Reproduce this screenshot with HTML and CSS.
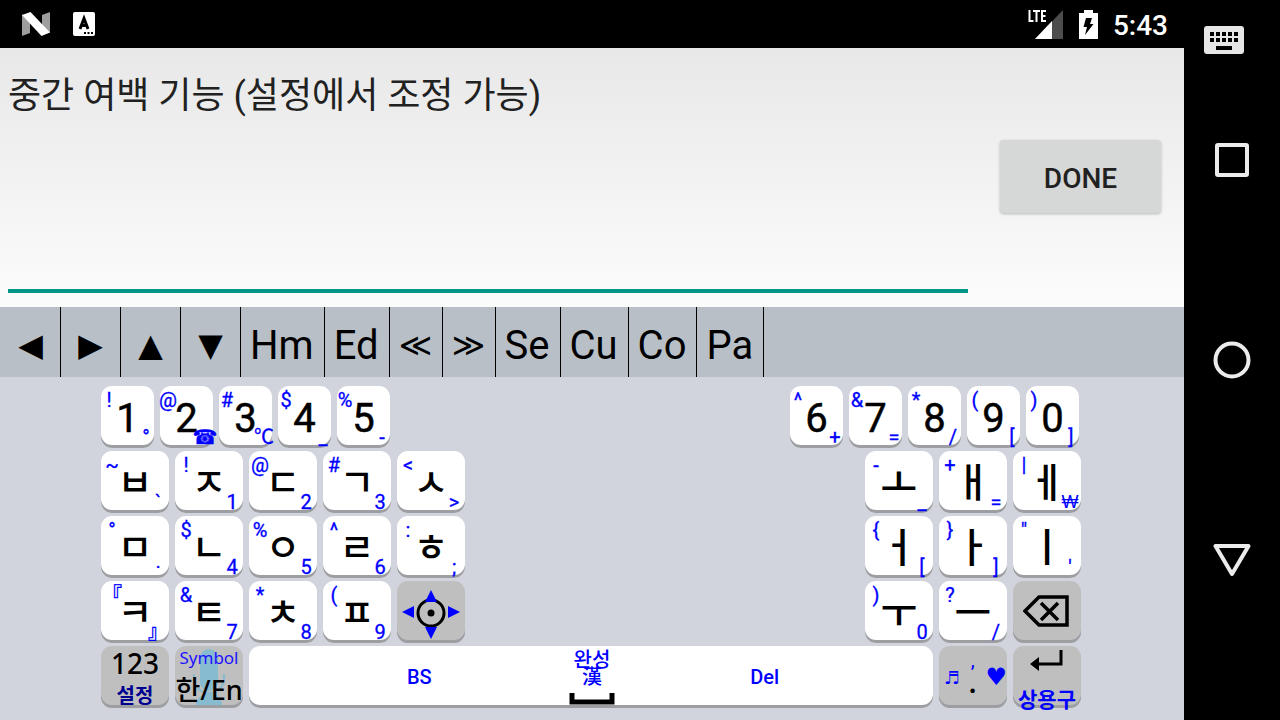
FILE: index.html
```html
<!DOCTYPE html>
<html lang="ko">
<head>
<meta charset="utf-8">
<meta name="viewport" content="width=device-width, initial-scale=1">
<title>한글 키보드</title>
<link rel="stylesheet" href="styles.css">
</head>
<body>
<div class="device">
  <div class="app">
    <header class="status">
      <div class="status-group">
        <svg class="icon-n" width="28" height="24" viewBox="0 0 28 24" aria-hidden="true"><path fill="#9e9e9e" d="M0 2.500l8 4V21L0 24zM20 3l8-3v21l-8-4z"/><path fill="#fff" d="M0 3L8.500 0 28 20.500 19.500 24z"/></svg>
        <svg width="22" height="24" viewBox="0 0 22 24" aria-hidden="true"><rect width="22" height="24" rx="2" fill="#fff"/><path d="M7 17l4-10.500L15 17M8.500 13.500h5" fill="none" stroke="#000" stroke-width="3"/><path d="M11 20h2v2h-2zM14.500 20h2v2h-2zM18 20h2v2h-2z"/></svg>
      </div>
      <div class="status-group status-right">
        <svg width="36" height="30" viewBox="0 0 36 30" role="img" aria-label="LTE"><path d="M35 1v29H7z" fill="#4d4d4d"/><path d="M24 12v18H7z" fill="#fff"/><path d="M0 0h19v15H0z"/><path fill="none" stroke="#fff" stroke-width="2" d="M1.500 1v11h4M5 2h7M8.500 2v11M18 2h-4v10h4M14 7h3.500"/></svg>
        <svg class="battery" width="19" height="29" viewBox="0 0 19 29" aria-hidden="true"><path fill="#fff" d="M0 3h5V0h9v3h5v26H0z"/><path d="M7 8h6l-2 6h3.500L6 25l2-8H4.500z"/></svg>
        <time class="clock">5:43</time>
      </div>
    </header>
    <main class="editor">
      <textarea class="editor-text" aria-label="입력" rows="1" spellcheck="false">중간 여백 기능 (설정에서 조정 가능)</textarea>
      <button class="done">DONE</button>
    </main>
    <div class="toolbar">
      <button class="tool arrow">◀</button><button class="tool arrow">▶</button><button class="tool arrow">▲</button><button class="tool arrow">▼</button><button class="tool">Hm</button><button class="tool">Ed</button><button class="tool jump">≪</button><button class="tool jump">≫</button><button class="tool">Se</button><button class="tool">Cu</button><button class="tool">Co</button><button class="tool">Pa</button>
    </div>
    <div class="keyboard">
      <div class="row digits">
        <div class="half">
          <button class="key"><span class="hint">!</span><span class="main">1</span><span class="hint low">°</span></button>
          <button class="key"><span class="hint">@</span><span class="main">2</span><span class="hint low symbol">☎</span></button>
          <button class="key"><span class="hint">#</span><span class="main">3</span><span class="hint low">℃</span></button>
          <button class="key"><span class="hint">$</span><span class="main">4</span><span class="hint low">_</span></button>
          <button class="key"><span class="hint">%</span><span class="main">5</span><span class="hint low">-</span></button>
        </div>
        <div class="half">
          <button class="key"><span class="hint">^</span><span class="main">6</span><span class="hint low">+</span></button>
          <button class="key"><span class="hint">&amp;</span><span class="main">7</span><span class="hint low">=</span></button>
          <button class="key"><span class="hint">*</span><span class="main">8</span><span class="hint low">/</span></button>
          <button class="key"><span class="hint">(</span><span class="main">9</span><span class="hint low">[</span></button>
          <button class="key"><span class="hint">)</span><span class="main">0</span><span class="hint low">]</span></button>
        </div>
      </div>
      <div class="row">
        <div class="half">
          <button class="key"><span class="hint">~</span><span class="main">ㅂ</span><span class="hint low">`</span></button>
          <button class="key"><span class="hint">!</span><span class="main">ㅈ</span><span class="hint low">1</span></button>
          <button class="key"><span class="hint">@</span><span class="main">ㄷ</span><span class="hint low">2</span></button>
          <button class="key"><span class="hint">#</span><span class="main">ㄱ</span><span class="hint low">3</span></button>
          <button class="key"><span class="hint">&lt;</span><span class="main">ㅅ</span><span class="hint low">&gt;</span></button>
        </div>
        <div class="half">
          <button class="key"><span class="hint">-</span><span class="main vowel">ㅗ</span><span class="hint low">_</span></button>
          <button class="key"><span class="hint">+</span><span class="main vowel">ㅐ</span><span class="hint low">=</span></button>
          <button class="key"><span class="hint">|</span><span class="main vowel">ㅔ</span><span class="hint low won">₩</span></button>
        </div>
      </div>
      <div class="row">
        <div class="half">
          <button class="key"><span class="hint">°</span><span class="main">ㅁ</span><span class="hint low">·</span></button>
          <button class="key"><span class="hint">$</span><span class="main">ㄴ</span><span class="hint low">4</span></button>
          <button class="key"><span class="hint">%</span><span class="main">ㅇ</span><span class="hint low">5</span></button>
          <button class="key"><span class="hint">^</span><span class="main">ㄹ</span><span class="hint low">6</span></button>
          <button class="key"><span class="hint">:</span><span class="main">ㅎ</span><span class="hint low">;</span></button>
        </div>
        <div class="half">
          <button class="key"><span class="hint">{</span><span class="main vowel">ㅓ</span><span class="hint low">[</span></button>
          <button class="key"><span class="hint">}</span><span class="main vowel">ㅏ</span><span class="hint low">]</span></button>
          <button class="key"><span class="hint">"</span><span class="main vowel">ㅣ</span><span class="hint low">'</span></button>
        </div>
      </div>
      <div class="row">
        <div class="half">
          <button class="key"><span class="hint quote">『</span><span class="main">ㅋ</span><span class="hint low quote">』</span></button>
          <button class="key"><span class="hint">&amp;</span><span class="main">ㅌ</span><span class="hint low">7</span></button>
          <button class="key"><span class="hint">*</span><span class="main">ㅊ</span><span class="hint low">8</span></button>
          <button class="key"><span class="hint">(</span><span class="main">ㅍ</span><span class="hint low">9</span></button>
          <button class="key gray" aria-label="이동"><svg class="art pad" width="60" height="50" viewBox="0 0 60 50"><circle cx="30" cy="24" r="13" fill="none" stroke="#000" stroke-width="3"/><circle cx="30" cy="24" r="3.500"/><path fill="#00f" d="M1 23l12-6v12zM59 23l-12-6v12zM30 1l-6 12h12zM30 50l-6-12h12z"/></svg></button>
        </div>
        <div class="half">
          <button class="key"><span class="hint">)</span><span class="main vowel">ㅜ</span><span class="hint low">0</span></button>
          <button class="key"><span class="hint">?</span><span class="main vowel">ㅡ</span><span class="hint low">/</span></button>
          <button class="key gray" aria-label="지우기"><svg class="art" width="48" height="34" viewBox="0 0 48 34"><path fill="none" stroke="#000" stroke-width="3.500" d="M2 16L16 2h28v28H16zM18 8l17 17M35 8L18 25"/></svg></button>
        </div>
      </div>
      <div class="row bottom">
        <button class="key gray stack settings"><span>123</span><span class="sub">설정</span></button>
        <button class="key gray stack language"><svg class="mic" width="32" height="56" viewBox="0 0 32 56" aria-hidden="true"><rect x="7" width="18" height="42" rx="9" fill="#87bbd0"/><path d="M1 25v5c0 8 7 14 15 14s15-6 15-14v-5" fill="none" stroke="#87bbd0" stroke-width="2"/><path d="M3 56c0-7 7-12 13-12s13 5 13 12z" fill="#87bbd0"/></svg><span class="symbol-label">Symbol</span><span class="lang-label">한/En</span></button>
        <button class="key space"><span>BS</span><span class="middle"><span>완성</span><span class="hanja">漢</span><svg width="46" height="13" viewBox="0 0 46 13" aria-hidden="true"><path d="M3 0v9h40V0" fill="none" stroke="#000" stroke-width="5"/></svg></span><span>Del</span></button>
        <button class="key gray marks"><span class="note">♬</span><span class="dots"><span class="tick">,</span><span class="period">.</span></span><span class="heart">♥</span></button>
        <button class="key gray stack enter"><svg width="34" height="24" viewBox="0 0 34 24" aria-hidden="true"><path d="M31 0v14H6" fill="none" stroke="#000" stroke-width="3"/><path d="M0 14l9-7v14z"/></svg><span class="phrase">상용구</span></button>
      </div>
    </div>
  </div>
  <nav class="nav">
    <button class="nav-button ime" aria-label="키보드 선택"><svg width="40" height="28" viewBox="0 0 40 28"><rect width="40" height="28" rx="3" fill="#e6e6e6"/><path d="M6 8h28M6 14h28" stroke="#000" stroke-width="4" stroke-dasharray="4 2"/><path d="M12 20h16v4H12z"/></svg></button>
    <button class="nav-button" aria-label="최근 앱"><svg width="38" height="38" viewBox="0 0 38 38"><rect x="4" y="4" width="30" height="30" rx="1" fill="none" stroke="#ececec" stroke-width="4"/></svg></button>
    <button class="nav-button" aria-label="홈"><svg width="38" height="38" viewBox="0 0 38 38"><circle cx="19" cy="19" r="16.500" fill="none" stroke="#ececec" stroke-width="4"/></svg></button>
    <button class="nav-button" aria-label="뒤로"><svg width="38" height="38" viewBox="0 0 38 38"><path d="M2.500 5h33L19 33z" fill="none" stroke="#ececec" stroke-width="4" stroke-linejoin="round"/></svg></button>
  </nav>
</div>
</body>
</html>
```

FILE: styles.css
```css
* { box-sizing: border-box; }

body {
  margin: 0;
  font-family: Roboto, "Noto Sans CJK KR", "DejaVu Sans", sans-serif;
  color: #000;
}

button {
  font: inherit;
  color: inherit;
  border: 0;
  padding: 0;
  background: none;
}

svg { display: block; flex: none; }

.device { display: flex; min-height: 100vh; background: #000; }
.app { flex: 1; min-width: 0; display: flex; flex-direction: column; }

/* Status bar */
.status {
  display: flex;
  justify-content: space-between;
  height: 48px;
  padding: 0 16px 0 22px;
  background: #000;
  color: #fff;
}
.status-group { display: flex; align-items: center; gap: 23px; }
.status-right { gap: 15px; }
.clock { font-size: 28px; line-height: 48px; font-weight: 500; padding-top: 3px; }

/* Text field */
.editor {
  display: flex;
  align-items: center;
  gap: 32px;
  padding: 0 23px 0 8px;
  background: linear-gradient(#e8e8e8, #fcfcfc);
}
.editor-text {
  flex: 1;
  min-width: 0;
  height: 245px;
  margin-bottom: 14px;
  padding: 22px 0 0;
  border: 0;
  border-bottom: 4px solid #009688;
  border-radius: 0;
  outline: 0;
  resize: none;
  background: none;
  font-family: Roboto, "Noto Sans CJK KR", sans-serif;
  font-size: 36px;
  line-height: 52px;
  color: #212121;
}
.done {
  width: 161px;
  height: 73px;
  margin-bottom: 2px;
  padding-top: 4px;
  border-radius: 4px;
  background: #d6d7d7;
  box-shadow: 0 1px 3px rgba(0, 0, 0, 0.25);
  font-size: 28px;
  font-weight: 500;
  color: #212121;
}

/* Editing toolbar */
.toolbar { display: flex; height: 70px; padding-left: 1px; background: #b8bfc7; }
.tool {
  min-width: 53px;
  padding: 6px 10px 0 9px;
  border-right: 1px solid #000;
  font-size: 40px;
}
.arrow, .jump { padding: 6px 0 0; font-family: "DejaVu Sans", sans-serif; font-size: 32px; }
.arrow { width: 60px; }

/* Keys */
.keyboard {
  flex: 1;
  display: flex;
  flex-direction: column;
  gap: 3px;
  padding: 9px 103px 10px 101px;
  background: #d1d4dd;
}
.row { display: flex; justify-content: space-between; }
.half { display: flex; gap: 6px; }
.key {
  display: grid;
  width: 68px;
  height: 62px;
  border-radius: 11px;
  background: #fff;
  box-shadow: inset 0 -3px #9c9ea1;
}
.key > * { grid-area: 1 / 1; }
.gray { background: #bfbfbf; }
.main {
  place-self: center;
  padding-bottom: 4px;
  font-family: "Noto Sans CJK KR", sans-serif;
  font-size: 38px;
  line-height: 58px;
  font-weight: 500;
}
.hint {
  display: flex;
  justify-content: center;
  justify-self: start;
  align-self: start;
  width: 22px;
  margin-top: 3px;
  font-size: 20px;
  line-height: 22px;
  color: #00f;
  -webkit-text-stroke: 0.3px #00f;
}
.low { justify-self: end; align-self: end; margin-top: 0; }
.main.vowel { font-size: 40px; }
.won { -webkit-text-stroke: 0; font-family: "Liberation Sans", sans-serif; font-size: 18px; }
.quote { font-weight: 700; }
.art { place-self: center; }
.pad { margin-top: 3px; }

.digits { padding-right: 2px; }
.digits .key { width: 53px; }
.digits .hint { width: 16px; }
.digits .main { font-family: Roboto, sans-serif; font-size: 40px; font-weight: 400; padding: 4px 0 0; -webkit-text-stroke: 0.5px #000; }
.digits .symbol { font-family: "DejaVu Sans", sans-serif; font-weight: 700; }

/* Bottom row */
.bottom { gap: 6px; }
.stack { display: flex; flex-direction: column; align-items: center; white-space: nowrap; }
.settings { font-family: "Noto Sans", "Noto Sans CJK KR", sans-serif; font-size: 28px; line-height: 34px; font-weight: 500; }
.settings .sub { font-size: 20px; line-height: 32px; font-weight: 700; color: #000090; }
.language { position: relative; z-index: 0; font-family: "Noto Sans", "Noto Sans CJK KR", sans-serif; }
.mic { position: absolute; z-index: -1; left: 18px; top: 3px; }
.symbol-label { font-size: 17px; line-height: 24px; color: #2010ff; }
.lang-label { font-size: 27px; line-height: 40px; font-weight: 500; }
.space {
  flex: 1;
  grid-template-columns: repeat(3, 1fr);
  align-items: center;
  justify-items: center;
  padding: 0 82px 0 84px;
  font-size: 20px;
  font-weight: 500;
  color: #00f;
}
.space > * { grid-area: auto; }
.middle { display: flex; flex-direction: column; align-items: center; line-height: 24px; }
.hanja { line-height: 18px; margin-top: -4px; margin-bottom: 7px; }
.marks { display: flex; align-items: center; justify-content: space-between; padding: 0 0 0 5px; color: #00f; font-family: "DejaVu Sans", sans-serif; }
.note { font-size: 18px; }
.heart { font-size: 24px; }
.dots { display: flex; flex-direction: column; align-items: center; padding-bottom: 10px; font-family: Roboto, sans-serif; }
.tick { font-size: 20px; line-height: 16px; }
.period { font-size: 40px; line-height: 24px; color: #000; }
.enter { padding-top: 4px; }
.phrase { font-family: "Noto Sans CJK KR", sans-serif; font-size: 21px; line-height: 48px; font-weight: 700; color: #00f; }

/* System navigation */
.nav {
  display: grid;
  grid-template-rows: 60px 200px 200px 200px;
  width: 96px;
  background: #000;
}
.nav-button { display: flex; align-items: center; justify-content: center; }
.ime { justify-content: flex-start; padding: 20px 0 0 20px; }
```
